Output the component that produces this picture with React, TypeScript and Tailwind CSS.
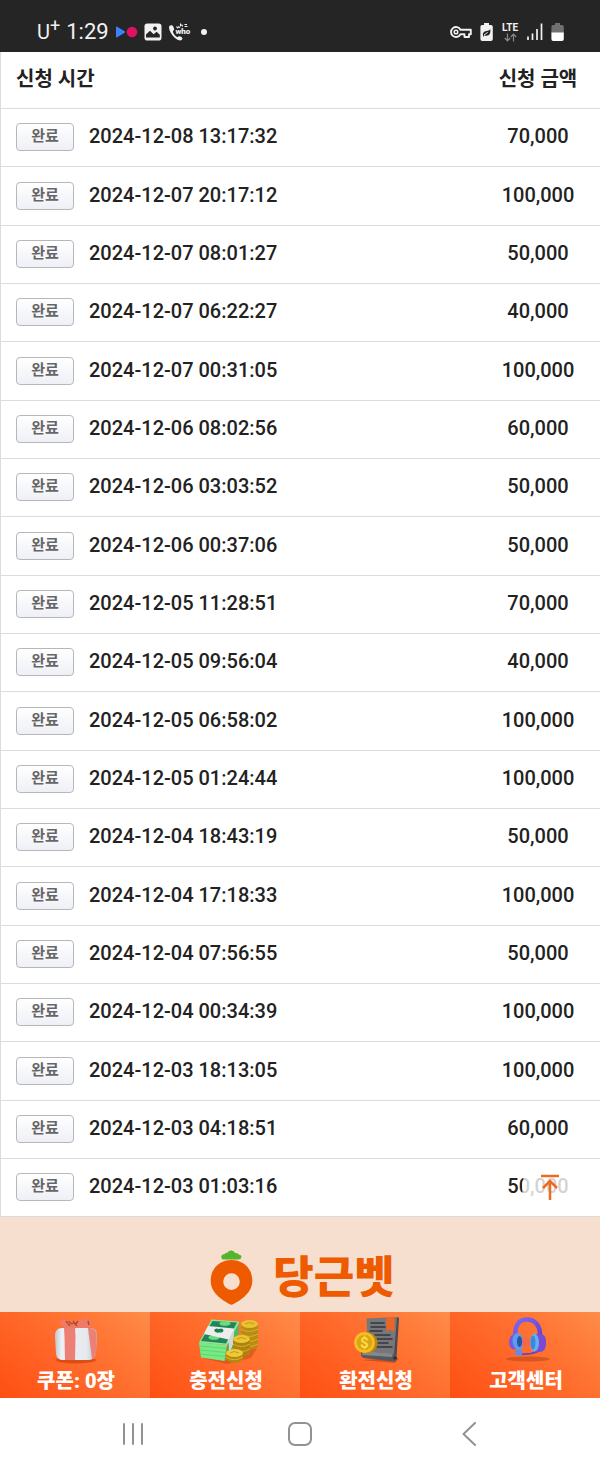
import React from 'react';

const requests = [
  { time: '2024-12-08 13:17:32', amount: '70,000' },
  { time: '2024-12-07 20:17:12', amount: '100,000' },
  { time: '2024-12-07 08:01:27', amount: '50,000' },
  { time: '2024-12-07 06:22:27', amount: '40,000' },
  { time: '2024-12-07 00:31:05', amount: '100,000' },
  { time: '2024-12-06 08:02:56', amount: '60,000' },
  { time: '2024-12-06 03:03:52', amount: '50,000' },
  { time: '2024-12-06 00:37:06', amount: '50,000' },
  { time: '2024-12-05 11:28:51', amount: '70,000' },
  { time: '2024-12-05 09:56:04', amount: '40,000' },
  { time: '2024-12-05 06:58:02', amount: '100,000' },
  { time: '2024-12-05 01:24:44', amount: '100,000' },
  { time: '2024-12-04 18:43:19', amount: '50,000' },
  { time: '2024-12-04 17:18:33', amount: '100,000' },
  { time: '2024-12-04 07:56:55', amount: '50,000' },
  { time: '2024-12-04 00:34:39', amount: '100,000' },
  { time: '2024-12-03 18:13:05', amount: '100,000' },
  { time: '2024-12-03 04:18:51', amount: '60,000' },
  { time: '2024-12-03 01:03:16', amount: '50,000' },
];

function StatusBar() {
  return (
    <header className="flex h-[52px] items-center justify-between bg-[#252525] pt-3 pr-9 pl-[37px] text-[#f1f1f1]">
      <div className="flex items-center">
        <span className="flex text-xl leading-6">
          U<sup className="top-0 -mt-1 text-lg leading-5">+</sup>
        </span>
        <span className="ml-1.5 text-[22px] leading-6">1:29</span>
        <svg className="ml-1.5" width="23" height="12" viewBox="0 0 23 12">
          <path d="M1 1.5Q1 .2 2.2.8L9.6 5.2Q10.5 6 9.6 6.8L2.2 11.2Q1 11.8 1 10.5Z" fill="#3f82f7" />
          <circle cx="17" cy="6" r="5.3" fill="#e01062" />
        </svg>
        <svg className="ml-1.5" width="18" height="18" viewBox="0 0 18 18">
          <rect x=".5" y=".5" width="17" height="17" rx="2.8" fill="#f1f1f1" />
          <path d="M2 14.5V11.5l4-3.8 3.6 3.6 3-2.5 3.2 3v2.7z" fill="#252525" />
          <circle cx="11" cy="5.5" r="1.9" fill="#252525" />
        </svg>
        <svg className="ml-1.5" width="23" height="20" viewBox="0 0 23 20">
          <path d="M1.1 4.6C.2 8.8 6.6 18.4 12.2 18.6c1.2 0 2.2-1.2 2.2-2 0-1-2.3-2.7-3.4-2.3-.9.3-1.1 1-1.8.8-1.6-.6-4.2-4-4.3-5.6 0-.8 1-.8 1.2-1.9C6.3 6.2 5 3.3 3.8 3.2c-1 0-2.4.4-2.7 1.4z" fill="#f1f1f1" />
          <text x="7.5" y="12" fontSize="8" fontWeight="900" fill="#f1f1f1">who</text>
          <path d="M8.5 4.5l1 1.5 1.3-1.3 1 1.2M12.5 1.6v3M12.5 3.5q2-1.5 2 1M16.5 2.5h2.5M16.5 4.5h3" stroke="#f1f1f1" strokeWidth="1.1" fill="none" />
        </svg>
        <span className="ml-2.5 size-1.5 rounded-full bg-[#f1f1f1]" />
      </div>

      <div className="flex items-center gap-2">
        <svg width="22" height="14" viewBox="0 0 22 14" fill="none" stroke="#f1f1f1">
          <path d="M10.5 4.7H20.8V9.3H19V12H14.5V9.3H10.5A5 5 0 1 1 10.5 4.7Z" strokeWidth="1.9" strokeLinejoin="round" />
          <circle cx="6" cy="7" r="1.8" strokeWidth="1.5" />
        </svg>
        <svg width="13" height="18" viewBox="0 0 13 18">
          <path d="M4 0h5v2h2q1.8 0 1.8 1.8V16q0 1.9-1.8 1.9H2.2Q.4 17.9.4 16V3.8Q.4 2 2.2 2H4z" fill="#f1f1f1" />
          <path d="M3 12.4q-.8-4 3.4-4.5Q9 7.8 10.3 6.3q.8 6.3-3.8 6.5-1.5 0-2.2-.6L3 14z" fill="#252525" />
          <path d="M4 12l3.8-2.6" stroke="#f1f1f1" strokeWidth=".9" />
        </svg>
        <div className="flex w-[18px] flex-col items-center">
          <span className="text-[10px] leading-2.5 font-bold">LTE</span>
          <svg width="13" height="9" viewBox="0 0 13 9" fill="none" stroke="#888" strokeWidth="1.2">
            <path d="M3.5.5v7M.8 5l2.7 2.8L6.2 5M9.5 8.5v-7M6.8 4l2.7-2.8L12.2 4" />
          </svg>
        </div>
        <svg width="16" height="18" viewBox="0 0 16 18" fill="none" stroke="#f1f1f1" strokeWidth="1.7">
          <path d="M1 17v-3.5M5.5 17V10.5M10 17V6M14.5 17V.5" />
        </svg>
        <svg width="13" height="18" viewBox="0 0 13 18">
          <path d="M4 0h5v2h2q1.8 0 1.8 1.8V10H.4V3.8Q.4 2 2.2 2H4z" fill="#707070" />
          <path d="M.4 9.5h12.4V16q0 1.9-1.8 1.9H2.2Q.4 17.9.4 16z" fill="#fff" />
        </svg>
      </div>
    </header>
  );
}

function RequestTable() {
  return (
    <table className="w-full border-collapse border-l border-[#dcdcdc] text-xl text-[#222]">
      <thead>
        <tr className="h-14 border-b border-[#dcdcdc]">
          <th className="pb-0.5 pl-[15px] text-left font-bold">신청 시간</th>
          <th className="w-[124px] pb-0.5 text-center font-bold">신청 금액</th>
        </tr>
      </thead>
      <tbody>
        {requests.map((request) => (
          <tr key={request.time} className="h-[58px] border-b border-[#dcdcdc] nth-[3n+2]:h-[59px]">
            <td className="pl-[15px]">
              <div className="flex items-center gap-[15px]">
                <span className="flex h-7 w-[58px] justify-center rounded border border-[#b5b7bb] bg-gradient-to-b from-white to-[#eef0f6] text-[15px] leading-6 font-bold text-[#666]">
                  완료
                </span>
                <time className="pb-0.5 leading-7 font-medium">{request.time}</time>
              </div>
            </td>
            <td className="pb-0.5 text-center font-medium">{request.amount}</td>
          </tr>
        ))}
      </tbody>
    </table>
  );
}

function BrandBanner() {
  return (
    <div className="flex h-[95px] items-center justify-center gap-5 bg-[#f6dfce] pt-7 pl-1">
      <svg width="44" height="56" viewBox="0 0 44 56">
        <path d="M15.5 9.6Q12 9.6 12.2 6.5 12.5 4 15.5 4.2 16.5 2.5 18.5 2.8 19.5.3 22.5.5 25 .6 26 3 29.3 2.8 30 4.8q2.8 0 2.4 2.5Q32 9.8 29 9.6z" fill="#52b52b" />
        <path d="M22.5 10C34.5 10 43.3 18.6 43.3 30.5 43.3 43 32 50 23.5 54.6q-1 .5-2 0C13 50 1.7 43 1.7 30.5 1.7 18.6 10.5 10 22.5 10Zm0 13.3a8.3 8.3 0 1 0 0 16.6 8.3 8.3 0 0 0 0-16.6Z" fillRule="evenodd" fill="#ee5a00" />
      </svg>
      <span className="text-[44px] leading-[56px] font-black text-[#ee5a00]">당근벳</span>
    </div>
  );
}

function GiftIcon() {
  return (
    <svg width="70" height="52" viewBox="0 0 70 52">
      <defs>
        <linearGradient id="giftBox" x2="1">
          <stop stopColor="#bfc6d2" />
          <stop offset=".15" stopColor="#eceff3" />
          <stop offset=".75" stopColor="#e6e9ee" />
          <stop offset="1" stopColor="#b8bcc9" />
        </linearGradient>
      </defs>
      <ellipse cx="35" cy="48" rx="20" ry="3.5" fill="#c43a08" opacity=".6" />
      <path d="M21 16h28q7 0 7 7l-1 18q-1 7-7 7H22q-6 0-7-6l-1-18q0-8 7-8z" fill="url(#giftBox)" />
      <path d="M23 16h11l.5 8-.5 24H24l-.5-24z" fill="#ee7f74" />
      <path d="M47 16q7-1 8.5 6l-.5 19q-1 5-4 6z" fill="#ea8076" />
      <path d="M19 10q1-3 5-2l10 1 10-2q5-1 6 1.5L51 13q-1 3-5 2.5l-9 .5-10 .5q-4-.5-6-2.5z" fill="#ee7b69" />
      <path d="M25 9l4 5M28 9q2 4 5 2M32 9l4 5M37 9l-3 4M47 9l1 4" stroke="#b9491d" strokeWidth="1.5" fill="none" />
    </svg>
  );
}

function CashIcon() {
  return (
    <svg width="70" height="52" viewBox="0 0 70 52">
      <path d="M12 46l24 6 24-6 6-10-20-6z" fill="#b63c08" opacity=".4" />
      <path d="M38 27l10-16-1 22-13 16z" fill="#4fb765" />
      <path d="M20 8.5q0-1 1.5-1L47 9.5q1.5.5 1 1.5L36 33 8 30.5z" fill="#8ce99a" />
      <path d="M21.5 9L46 10.5 35 31.5 10 29z" fill="#22845a" />
      <path d="M8 30.5L36 33 33.5 49 10 45.5z" fill="#78ea83" />
      <path d="M8.5 34l27 2.5M9 38l26 2.5M9.5 42l25 2.5" stroke="#60d573" />
      <ellipse cx="34" cy="11.5" rx="5.5" ry="2.3" fill="#6cdd7c" />
      <ellipse cx="23" cy="25.5" rx="5.5" ry="2.3" fill="#6cdd7c" />
      <path d="M17 14l26 2.5-1 15-3.5 9-1-13L13 22z" fill="#eceeee" />
      <path d="M43 16.5l-1 15-3.5 9-1-13z" fill="#d3d6d9" />
      <path d="M23 18q2-2.5 4.5-1 4-1.5 5 1 0 3-4.5 2.5-4 1-5-2.5z" fill="#1f7f52" />
      <path d="M50 12v24q8 4 17-1V12z" fill="#b98b12" />
      <ellipse cx="58.5" cy="12" rx="8.5" ry="4" fill="#e8c230" />
      <path d="M50 17q8 5 17 0M50 22q8 5 17 0M50 27q8 5 17 0M50 32q8 5 17 0" stroke="#dab129" fill="none" />
      <path d="M42 27v16q8 4 17-1V27z" fill="#ae820e" />
      <ellipse cx="50.5" cy="27" rx="8.5" ry="4" fill="#ebc532" />
      <path d="M42 32q8 5 17 0M42 37q8 5 17 0" stroke="#d9b028" fill="none" />
      <path d="M35 41v7q8 6 17 0v-7z" fill="#b4870d" />
      <ellipse cx="43.5" cy="41" rx="8.5" ry="4" fill="#edca3a" />
      <path d="M35 45q8 5.5 17 0" stroke="#dcb52a" fill="none" />
      <path d="M39 41q4-3 9 0M46 27q4-3 9 0M54 12q4-3 9 0" stroke="#c39a1b" fill="none" />
    </svg>
  );
}

function ReceiptIcon() {
  return (
    <svg width="70" height="52" viewBox="0 0 70 52">
      <path d="M20 48l34 3 4-5z" fill="#a83508" opacity=".5" />
      <path d="M25.5 6.5L56 5l-1 40-28-5z" fill="#75777a" />
      <path d="M56 5l2 1-2.5 39-2.5-2z" fill="#494b51" />
      <path d="M45 5.5h8.5V20L49 17.5 45.5 20z" fill="#ee6425" />
      <path d="M30 11h13M30 15h14M29 19h12M34 23h15M36 27h15M37 31h10M36 35h15" stroke="#33363c" strokeWidth="1.5" strokeLinecap="round" />
      <path d="M22 39l30 2.5q4 .5 4 5-1 3.5-4 3L23 46q-3-1-3-4 0-3 2-3z" fill="#55585e" />
      <path d="M22 39l30 2.5-1 3.5-30-2z" fill="#85878b" />
      <circle cx="54" cy="46" r="1.8" fill="#303238" />
      <circle cx="26" cy="31" r="10.5" fill="#bd8608" />
      <circle cx="23.5" cy="30.5" r="10.5" fill="#f2c023" />
      <circle cx="23.5" cy="30.5" r="7.8" fill="#daa516" />
      <text x="19" y="36" fontSize="15" fontWeight="700" fill="#ffdc43">$</text>
    </svg>
  );
}

function HeadsetIcon() {
  return (
    <svg width="70" height="52" viewBox="0 0 70 52">
      <defs>
        <linearGradient id="headband" x2="1" y2="1">
          <stop stopColor="#7d68f0" />
          <stop offset="1" stopColor="#6a3fcb" />
        </linearGradient>
      </defs>
      <ellipse cx="37" cy="47" rx="22" ry="2.5" fill="#b5451a" opacity=".55" />
      <path d="M24.5 27C23 13 28 7.5 36 7.5S49.5 14 49 24" fill="none" stroke="url(#headband)" strokeWidth="4.5" />
      <path d="M28 42q11 1 20-3" fill="none" stroke="#6540c7" strokeWidth="1.8" />
      <ellipse cx="23" cy="30" rx="5" ry="7.5" fill="#7658e4" />
      <ellipse cx="27" cy="29.5" rx="5.5" ry="8.5" fill="#5a9df0" transform="rotate(-8 27 29.5)" />
      <ellipse cx="28.5" cy="29.5" rx="2.5" ry="5.5" fill="#29569f" />
      <path d="M44 22h6q5 1 5 7v4q-1 7-6 7h-5z" fill="#7a4bd2" />
      <ellipse cx="43.5" cy="30.5" rx="4.5" ry="9" fill="#62b2f2" />
      <ellipse cx="42" cy="30.5" rx="2.5" ry="7" fill="#3f86dd" />
      <path d="M32 27v7M34.5 25v10M37 27v7" stroke="#f0625c" strokeWidth="1.5" />
      <rect x="24" y="38" width="7.5" height="5.5" rx="2.7" fill="#5e8bee" />
    </svg>
  );
}

const tabs = [
  { label: '쿠폰: 0장', icon: <GiftIcon /> },
  { label: '충전신청', icon: <CashIcon /> },
  { label: '환전신청', icon: <ReceiptIcon /> },
  { label: '고객센터', icon: <HeadsetIcon /> },
];

function TabBar() {
  return (
    <nav className="grid h-[85px] grid-cols-4">
      {tabs.map((tab) => (
        <a
          key={tab.label}
          href="#"
          className="flex flex-col items-center bg-[linear-gradient(40deg,#ff4f12_0%,#ff6224_35%,#ff7a38_75%,#ff8c4a_100%)] pl-0.5 text-xl leading-[34px] font-black text-white"
        >
          {tab.icon}
          <span>{tab.label}</span>
        </a>
      ))}
    </nav>
  );
}

function SystemNav() {
  return (
    <nav className="flex h-[70px] items-center justify-around bg-white px-[50px] pt-1 text-[#929292]">
      <button aria-label="Recents">
        <svg width="24" height="24" viewBox="0 0 24 24" stroke="currentColor" strokeWidth="2" strokeLinecap="round">
          <path d="M3 2v20M12 2v20M21 2v20" />
        </svg>
      </button>
      <button aria-label="Home">
        <svg width="24" height="24" viewBox="0 0 24 24" fill="none" stroke="currentColor" strokeWidth="2">
          <rect x="1" y="1" width="22" height="22" rx="6" />
        </svg>
      </button>
      <button aria-label="Back">
        <svg width="24" height="24" viewBox="0 0 24 24" fill="none" stroke="currentColor" strokeWidth="2" strokeLinecap="round" strokeLinejoin="round">
          <path d="M20 1L8.5 12 20 23" />
        </svg>
      </button>
    </nav>
  );
}

export default function App() {
  return (
    <div className="bg-white font-[Roboto,'Noto_Sans_CJK_KR',sans-serif]">
      <StatusBar />
      <main className="relative">
        <RequestTable />
        <button
          aria-label="Scroll to top"
          className="absolute right-[22px] bottom-0.5 flex size-14 items-center justify-center rounded-full bg-white/80 text-[#ee6a1c]"
        >
          <svg width="20" height="26" viewBox="0 0 20 26" fill="none" stroke="currentColor" strokeWidth="2.5">
            <path d="M1 2h18M10 26V7M3 14l7-7 7 7" />
          </svg>
        </button>
      </main>
      <BrandBanner />
      <TabBar />
      <SystemNav />
    </div>
  );
}
